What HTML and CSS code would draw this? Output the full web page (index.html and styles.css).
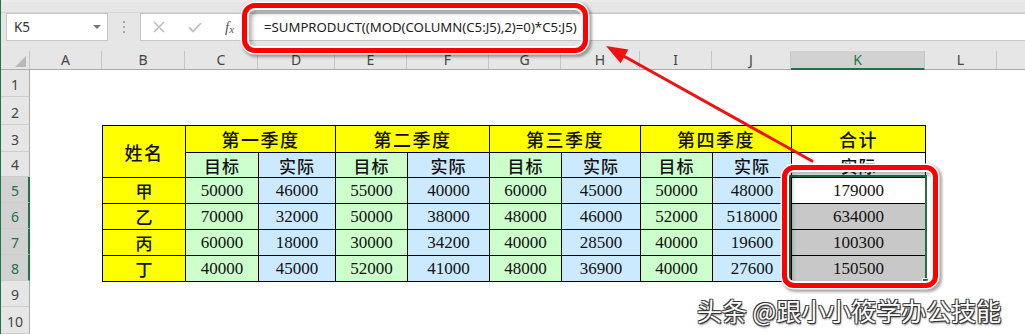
FILE: index.html
```html
<!DOCTYPE html>
<html lang="zh-CN">
<head>
<meta charset="utf-8">
<title>SUMPRODUCT</title>
<link rel="stylesheet" href="styles.css">
</head>
<body>
<div class="window">
  <div class="topstrip"></div>
  <div class="fbar">
    <div class="namebox"><span class="ref">K5</span><span class="caret"></span></div>
    <div class="grip"><i></i><i></i><i></i></div>
    <div class="fbox">
      <span class="tool">
        <svg width="12" height="12" viewBox="0 0 12 12"><path d="M1 1 L11 11 M11 1 L1 11" stroke="#bfbfbf" stroke-width="1.6" fill="none"/></svg>
      </span>
      <span class="tool">
        <svg width="14" height="11" viewBox="0 0 14 11"><path d="M1 5.5 L5 9.5 L13 1" stroke="#bfbfbf" stroke-width="1.8" fill="none"/></svg>
      </span>
      <span class="fxlabel">f<sub>x</sub></span>
      <div class="formula">=SUMPRODUCT((MOD(COLUMN(C5:J5),2)=0)*C5:J5)</div>
    </div>
  </div>
  <div class="spacer"></div>
  <div class="colheads">
    <div class="ch corner"><span class="tri"></span></div>
    <div class="ch w-a">A</div>
    <div class="ch w-b">B</div>
    <div class="ch w-c">C</div>
    <div class="ch w-d">D</div>
    <div class="ch w-e">E</div>
    <div class="ch w-f">F</div>
    <div class="ch w-g">G</div>
    <div class="ch w-h">H</div>
    <div class="ch w-i">I</div>
    <div class="ch w-j">J</div>
    <div class="ch w-k sel">K</div>
    <div class="ch w-l">L</div>
    <div class="ch w-m"></div>
  </div>
  <div class="sheet">
    <div class="rowheads">
      <div class="rh h27">1</div>
      <div class="rh h28">2</div>
      <div class="rh h27">3</div>
      <div class="rh h25">4</div>
      <div class="rh h26 sel">5</div>
      <div class="rh h26 sel">6</div>
      <div class="rh h26 sel">7</div>
      <div class="rh h26 sel">8</div>
      <div class="rh h26">9</div>
      <div class="rh h27">10</div>
    </div>
    <div class="cells">
      <div class="tbl">
        <div class="c yel hd name">姓名</div>
        <div class="c yel hd q">第一季度</div>
        <div class="c yel hd q">第二季度</div>
        <div class="c yel hd q">第三季度</div>
        <div class="c yel hd q">第四季度</div>
        <div class="c yel hd">合计</div>

        <div class="c grn sub">目标</div>
        <div class="c blu sub">实际</div>
        <div class="c grn sub">目标</div>
        <div class="c blu sub">实际</div>
        <div class="c grn sub">目标</div>
        <div class="c blu sub">实际</div>
        <div class="c grn sub">目标</div>
        <div class="c blu sub">实际</div>
        <div class="c wht sub">实际</div>

        <div class="c yel nm">甲</div>
        <div class="c grn num">50000</div>
        <div class="c blu num">46000</div>
        <div class="c grn num">55000</div>
        <div class="c blu num">40000</div>
        <div class="c grn num">60000</div>
        <div class="c blu num">45000</div>
        <div class="c grn num">50000</div>
        <div class="c blu num">48000</div>
        <div class="c wht num">179000</div>

        <div class="c yel nm">乙</div>
        <div class="c grn num">70000</div>
        <div class="c blu num">32000</div>
        <div class="c grn num">50000</div>
        <div class="c blu num">38000</div>
        <div class="c grn num">48000</div>
        <div class="c blu num">46000</div>
        <div class="c grn num">52000</div>
        <div class="c blu num">518000</div>
        <div class="c gry num">634000</div>

        <div class="c yel nm">丙</div>
        <div class="c grn num">60000</div>
        <div class="c blu num">18000</div>
        <div class="c grn num">30000</div>
        <div class="c blu num">34200</div>
        <div class="c grn num">40000</div>
        <div class="c blu num">28500</div>
        <div class="c grn num">40000</div>
        <div class="c blu num">19600</div>
        <div class="c gry num">100300</div>

        <div class="c yel nm">丁</div>
        <div class="c grn num">40000</div>
        <div class="c blu num">45000</div>
        <div class="c grn num">52000</div>
        <div class="c blu num">41000</div>
        <div class="c grn num">48000</div>
        <div class="c blu num">36900</div>
        <div class="c grn num">40000</div>
        <div class="c blu num">27600</div>
        <div class="c gry num">150500</div>

        <div class="selection"><span class="handle"></span></div>
      </div>
    </div>
  </div>

  <div class="ring ring-formula"></div>
  <div class="ring ring-total"></div>
  <svg class="arrow" width="1025" height="334" viewBox="0 0 1025 334">
    <line x1="812" y1="161" x2="620" y2="54" stroke="#f01010" stroke-width="3" stroke-linecap="round"/>
    <polygon points="606,46 620.6,63.3 628.4,49.5" fill="#f01010"/>
  </svg>
  <div class="watermark">头条 @跟小小筱学办公技能</div>
</div>
</body>
</html>
```

FILE: styles.css
```css
html, body {
  margin: 0;
  padding: 0;
}
body {
  width: 1025px;
  height: 334px;
  overflow: hidden;
  background: #fff;
  font-family: "Noto Sans", "Noto Sans CJK SC", sans-serif;
}
.window {
  position: relative;
  height: 334px;
  border-left: 1px solid #217346;
  box-sizing: border-box;
}

/* top strip */
.topstrip {
  height: 13px;
  box-sizing: border-box;
  background: #e6e6e6;
  border-top: 2px solid #ececec;
  border-bottom: 1px solid #d6d6d6;
}

/* formula bar */
.fbar {
  display: flex;
  height: 28px;
  background: #e6e6e6;
}
.namebox {
  margin-left: 5px;
  width: 102px;
  box-sizing: border-box;
  background: #fff;
  border: 1px solid #c6c6c6;
  display: flex;
  align-items: center;
  justify-content: space-between;
  padding: 0 6px 0 7px;
  font-size: 13.5px;
  color: #333;
}
.caret {
  width: 0;
  height: 0;
  border-left: 4px solid transparent;
  border-right: 4px solid transparent;
  border-top: 4px solid #777;
}
.grip {
  width: 32px;
  display: flex;
  flex-direction: column;
  align-items: center;
  justify-content: center;
  gap: 3px;
}
.grip i {
  display: block;
  width: 2px;
  height: 2px;
  background: #a6a6a6;
}
.fbox {
  flex: 1;
  display: flex;
  align-items: center;
  background: #fff;
  border: 1px solid #c6c6c6;
  border-right: none;
}
.tool {
  width: 36px;
  display: flex;
  justify-content: center;
  align-items: center;
}
.fxlabel {
  width: 29px;
  text-align: center;
  font-family: "Liberation Serif", serif;
  font-style: italic;
  font-size: 15px;
  color: #555;
  padding-left: 2px;
}
.fxlabel sub {
  font-size: 11px;
  vertical-align: -1px;
}
.formula {
  padding-left: 20px;
  font-size: 13.2px;
  color: #222;
  white-space: nowrap;
}

.spacer {
  height: 10px;
  background: #e6e6e6;
}

/* column headers */
.colheads {
  display: flex;
  height: 19px;
  box-sizing: border-box;
  background: #e6e6e6;
  border-bottom: 1px solid #ababab;
}
.ch {
  box-sizing: border-box;
  border-right: 1px solid #c6c6c6;
  text-align: center;
  font-size: 14px;
  line-height: 18px;
  color: #444;
  flex: none;
}
.corner {
  width: 29px;
  display: flex;
  justify-content: flex-end;
  align-items: flex-end;
  padding: 0 3px 2px 0;
}
.tri {
  width: 0;
  height: 0;
  border-left: 11px solid transparent;
  border-bottom: 11px solid #b8b8b8;
}
.w-a { width: 72px; }
.w-b { width: 83px; }
.w-c { width: 73px; }
.w-d { width: 77px; }
.w-e { width: 72px; }
.w-f { width: 82px; }
.w-g { width: 72px; }
.w-h { width: 79px; }
.w-i { width: 72px; }
.w-j { width: 79px; }
.w-k { width: 134px; }
.w-l { width: 72px; }
.w-m { flex: 1; border-right: none; }
.ch.sel {
  background: #d2d2d2;
  border-bottom: 2px solid #217346;
  color: #217346;
  height: 19px;
  line-height: 17px;
}

/* sheet */
.sheet {
  display: flex;
}
.rowheads {
  width: 29px;
  flex: none;
}
.rh {
  box-sizing: border-box;
  background: #e6e6e6;
  border-right: 1px solid #ababab;
  border-bottom: 1px solid #cdcdcd;
  display: flex;
  align-items: flex-end;
  justify-content: center;
  font-size: 14px;
  line-height: 18px;
  color: #444;
  padding-bottom: 2px;
}
.rh.sel {
  background: #d2d2d2;
  border-right: 2px solid #217346;
  color: #217346;
  padding-left: 1px;
}
.h25 { height: 25px; }
.h26 { height: 26px; }
.h27 { height: 27px; }
.h28 { height: 28px; }

.cells {
  flex: 1;
  padding: 55px 0 0 72px;
}
.tbl {
  position: relative;
  display: grid;
  grid-template-columns: 82px 72px 76px 71px 81px 71px 78px 71px 78px 133px;
  grid-template-rows: 26px 24px 25px 25px 25px 25px;
  gap: 1px;
  padding: 1px;
  background: #000;
  width: max-content;
}
.c {
  display: flex;
  align-items: center;
  justify-content: center;
  color: #111;
}
.yel { background: #ffff00; }
.grn { background: #ccffcc; }
.blu { background: #cceaff; }
.wht { background: #fff; }
.gry { background: #c8c8c8; }

.hd {
  font-family: "Noto Sans CJK SC", sans-serif;
  font-weight: 500;
  font-size: 18px;
  letter-spacing: 1.5px;
}
.name {
  grid-row: span 2;
}
.q {
  grid-column: span 2;
}
.sub {
  font-family: "Noto Sans CJK SC", sans-serif;
  font-weight: 500;
  font-size: 17px;
  letter-spacing: 1px;
}
.nm {
  font-family: "Noto Sans CJK SC", sans-serif;
  font-weight: 500;
  font-size: 17px;
}
.num {
  font-family: "Liberation Serif", serif;
  font-size: 17px;
}

.selection {
  position: absolute;
  left: 687px;
  top: 50px;
  width: 138px;
  height: 108px;
  box-sizing: border-box;
  border: 2px solid #217346;
}
.handle {
  position: absolute;
  right: -4px;
  bottom: -4px;
  width: 5px;
  height: 5px;
  background: #217346;
  border: 1px solid #fff;
}

/* overlays */
.ring {
  position: absolute;
  box-sizing: border-box;
  border: 5px solid #f00;
  border-radius: 13px;
  box-shadow: 0 0 0 1.5px #fff, 2px 2px 3px 1.5px rgba(0,0,0,0.35),
              inset 0 0 0 2px #fff, inset 3px 3px 4px 2px rgba(0,0,0,0.3);
  pointer-events: none;
}
.ring-formula {
  left: 241px;
  top: 3px;
  width: 346px;
  height: 50px;
}
.ring-total {
  left: 781px;
  top: 165px;
  width: 156px;
  height: 123px;
  border-radius: 12px;
}
.arrow {
  position: absolute;
  left: -1px;
  top: 0;
  pointer-events: none;
}
.watermark {
  position: absolute;
  left: 696px;
  top: 294px;
  font-family: "Noto Sans CJK SC", sans-serif;
  font-size: 25px;
  line-height: 32px;
  color: #fff;
  white-space: nowrap;
  text-shadow: -1px -1px 0 #333, 1px 1px 0 #333, -1px 1px 0 #555, 1px -1px 0 #555, 1px 2px 2px rgba(0,0,0,0.5);
}
```
